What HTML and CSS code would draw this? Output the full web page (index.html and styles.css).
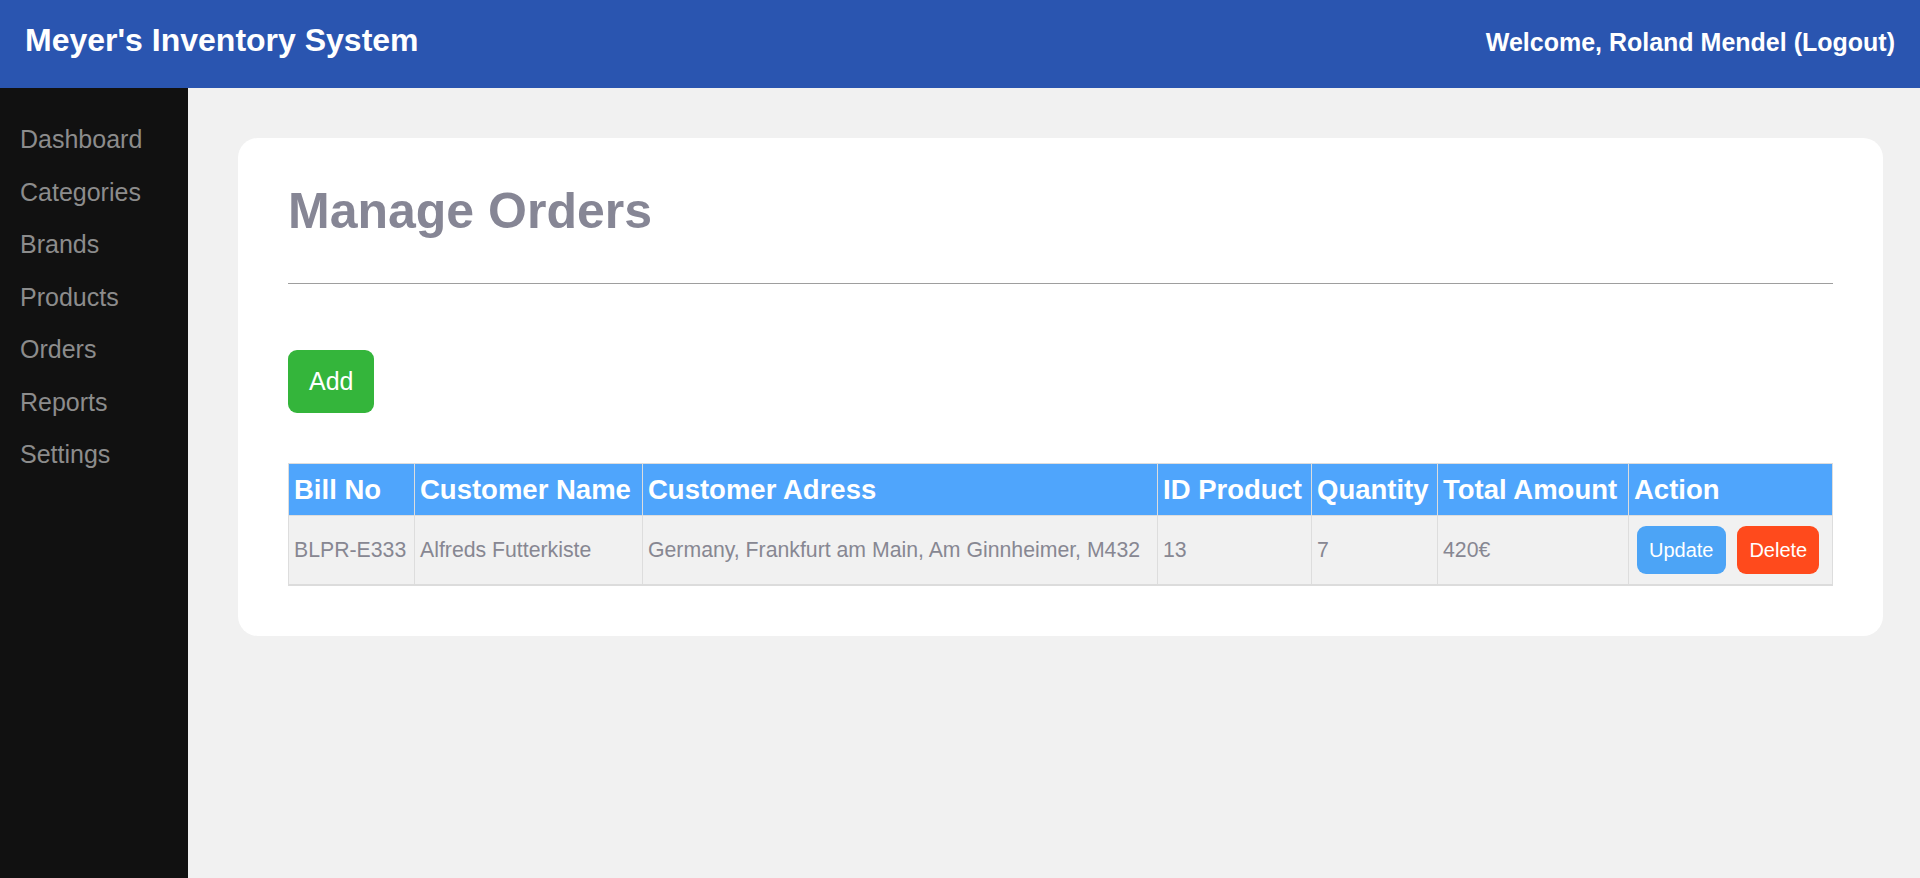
FILE: index.html
```html
<!DOCTYPE html>
<html lang="en">
<head>
<meta charset="utf-8">
<title>Meyer's Inventory System - Manage Orders</title>
<link rel="stylesheet" href="styles.css">
</head>
<body>
<header class="topbar">
  <div class="brand">Meyer's Inventory System</div>
  <div class="welcome">Welcome, Roland Mendel (Logout)</div>
</header>
<div class="layout">
  <nav class="sidebar">
    <a class="nav-item" href="#">Dashboard</a>
    <a class="nav-item" href="#">Categories</a>
    <a class="nav-item" href="#">Brands</a>
    <a class="nav-item" href="#">Products</a>
    <a class="nav-item" href="#">Orders</a>
    <a class="nav-item" href="#">Reports</a>
    <a class="nav-item" href="#">Settings</a>
  </nav>
  <main class="main">
    <section class="card">
      <h1 class="page-title">Manage Orders</h1>
      <hr class="divider">
      <button class="btn btn-add">Add</button>
      <table class="orders">
        <thead>
          <tr>
            <th class="c-bill">Bill No</th>
            <th class="c-name">Customer Name</th>
            <th class="c-addr">Customer Adress</th>
            <th class="c-id">ID Product</th>
            <th class="c-qty">Quantity</th>
            <th class="c-total">Total Amount</th>
            <th class="c-action">Action</th>
          </tr>
        </thead>
        <tbody>
          <tr>
            <td>BLPR-E333</td>
            <td>Alfreds Futterkiste</td>
            <td>Germany, Frankfurt am Main, Am Ginnheimer, M432</td>
            <td>13</td>
            <td>7</td>
            <td>420€</td>
            <td><button class="btn btn-update">Update</button> <button class="btn btn-delete">Delete</button></td>
          </tr>
        </tbody>
      </table>
    </section>
  </main>
</div>
</body>
</html>
```
FILE: styles.css
```css
* { box-sizing: border-box; }

html, body {
  margin: 0;
  padding: 0;
  height: 100%;
}

body {
  font-family: "Liberation Sans", Arial, sans-serif;
  background: #f1f1f1;
  display: flex;
  flex-direction: column;
}

.topbar {
  height: 88px;
  flex: 0 0 88px;
  background: #2a55b0;
  color: #ffffff;
  display: flex;
  justify-content: space-between;
  align-items: baseline;
  padding: 22px 25px 0 25px;
}

.brand {
  font-size: 32px;
  font-weight: bold;
}

.welcome {
  font-size: 25px;
  font-weight: bold;
}

.layout {
  flex: 1;
  display: flex;
}

.sidebar {
  width: 188px;
  flex: 0 0 188px;
  background: #111111;
  padding-top: 25px;
}

.nav-item {
  display: block;
  font-size: 25px;
  line-height: 28.5px;
  color: #8c8c8c;
  text-decoration: none;
  padding: 12px 0 12px 20px;
}

.main {
  flex: 1;
  padding: 50px 37px 50px 50px;
}

.card {
  background: #ffffff;
  border-radius: 20px;
  padding: 44px 50px 50px;
}

.page-title {
  margin: 0;
  font-size: 50px;
  font-weight: bold;
  color: #868695;
}

.divider {
  border: 0;
  border-top: 1px solid #9e9e9e;
  margin: 43px 0 66px;
}

.btn {
  font-family: "Liberation Sans", Arial, sans-serif;
  border: 0;
  color: #ffffff;
  cursor: pointer;
}

.btn-add {
  display: block;
  background: #34b53b;
  font-size: 25px;
  line-height: 29px;
  padding: 17px 21px;
  border-radius: 9px;
  margin-bottom: 50px;
}

.orders {
  width: 100%;
  table-layout: fixed;
  border-collapse: collapse;
  border: 1px solid #dddddd;
  border-bottom: 2px solid #dcdcdc;
}

.orders th {
  background: #4fa5fc;
  color: #ffffff;
  font-size: 27.5px;
  font-weight: bold;
  text-align: left;
  padding: 10px 5px 9px;
  border: 1px solid #dddddd;
  white-space: nowrap;
}

.orders td {
  background: #f1f1f1;
  color: #878792;
  font-size: 21.25px;
  padding: 10px 5px;
  border: 1px solid #dddddd;
  vertical-align: middle;
  white-space: nowrap;
}

.c-bill { width: 126px; }
.c-name { width: 228px; }
.c-addr { width: 515px; }
.c-id { width: 154px; }
.c-qty { width: 126px; }
.c-total { width: 191px; }
.c-action { width: 204px; }

.btn-update,
.btn-delete {
  display: inline-block;
  vertical-align: middle;
  font-size: 20px;
  line-height: 24px;
  padding: 12px 12px;
  border-radius: 9px;
  margin: 0 3px;
}

.btn-update { background: #4ca4f6; }
.btn-delete { background: #ff4a1c; }
```
